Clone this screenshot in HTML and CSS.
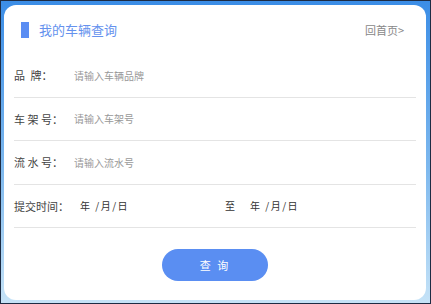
FILE: index.html
```html
<!DOCTYPE html>
<html lang="zh-CN">
  <head>
    <meta charset="UTF-8" />
    <meta name="viewport" content="width=device-width, initial-scale=1.0" />
    <title>我的车辆查询</title>
    <link rel="stylesheet" href="styles.css">
  </head>
  <body>
    <div class="card">
      <div class="header">
        <div class="title"><span class="title-bar"></span>我的车辆查询</div>
        <a class="home-link" href="#">回首页&gt;</a>
      </div>

      <!-- Search form -->
      <div class="form">
        <div class="row">
          <label class="label">品&ensp;牌：</label>
          <input class="field" type="text" placeholder="请输入车辆品牌" />
        </div>
        <div class="row">
          <label class="label">车 架 号：</label>
          <input class="field" type="text" placeholder="请输入车架号" />
        </div>
        <div class="row">
          <label class="label">流 水 号：</label>
          <input class="field" type="text" placeholder="请输入流水号" />
        </div>
        <div class="row">
          <label class="label">提交时间：</label>
          <span class="date date-from">年 /月/日</span>
          <span class="to">至</span>
          <span class="date">年 /月/日</span>
        </div>
      </div>

      <div class="actions">
        <button class="btn-search" type="button">查 询</button>
      </div>
    </div>
  </body>
</html>
```

FILE: styles.css
```css
/* General styling */
html,
body {
  height: 100%;
}

body {
  margin: 0;
  box-sizing: border-box;
  padding: 4px 4px 3px 3px;
  font-family: "Noto Sans CJK SC", "Noto Sans", sans-serif;
  background: linear-gradient(to bottom, #3b8de6 0%, #7db8ee 55%, #c6e3f7 100%);
  border: 1px solid #1d2c44;
}

.card {
  height: 100%;
  box-sizing: border-box;
  background-color: #fff;
  border-radius: 12px;
  padding: 0 10px;
}

/* Header */
.header {
  height: 49px;
  display: flex;
  align-items: center;
  justify-content: space-between;
  padding: 0 12px 0 7px;
}

.title {
  display: flex;
  align-items: center;
  font-size: 13px;
  color: #6592ee;
}

.title-bar {
  width: 8px;
  height: 16px;
  background-color: #5a8df3;
  margin-right: 10px;
}

.home-link {
  font-size: 11px;
  color: #888;
  text-decoration: none;
}

/* Form rows */
.row {
  height: 42.5px;
  display: flex;
  align-items: center;
  border-bottom: 1px solid #e4e4e4;
}

.label {
  width: 60px;
  flex-shrink: 0;
  font-size: 11px;
  color: #444;
}

.field {
  flex: 1;
  border: none;
  outline: none;
  padding: 0;
  font-family: inherit;
  font-size: 10px;
  color: #333;
  background: transparent;
}

.field::placeholder {
  color: #999;
}

.date {
  font-size: 10px;
  color: #333;
  letter-spacing: 1.5px;
}

.date-from {
  width: 145px;
  padding-left: 6px;
}

.to {
  font-size: 10px;
  color: #333;
  margin-right: 15px;
}

/* Button */
.actions {
  display: flex;
  justify-content: center;
  padding-top: 21px;
}

.btn-search {
  width: 106px;
  height: 32px;
  border: none;
  border-radius: 16px;
  background-color: #5a8ef2;
  color: #fff;
  font-family: inherit;
  font-size: 11px;
  letter-spacing: 2px;
  cursor: pointer;
}
```
